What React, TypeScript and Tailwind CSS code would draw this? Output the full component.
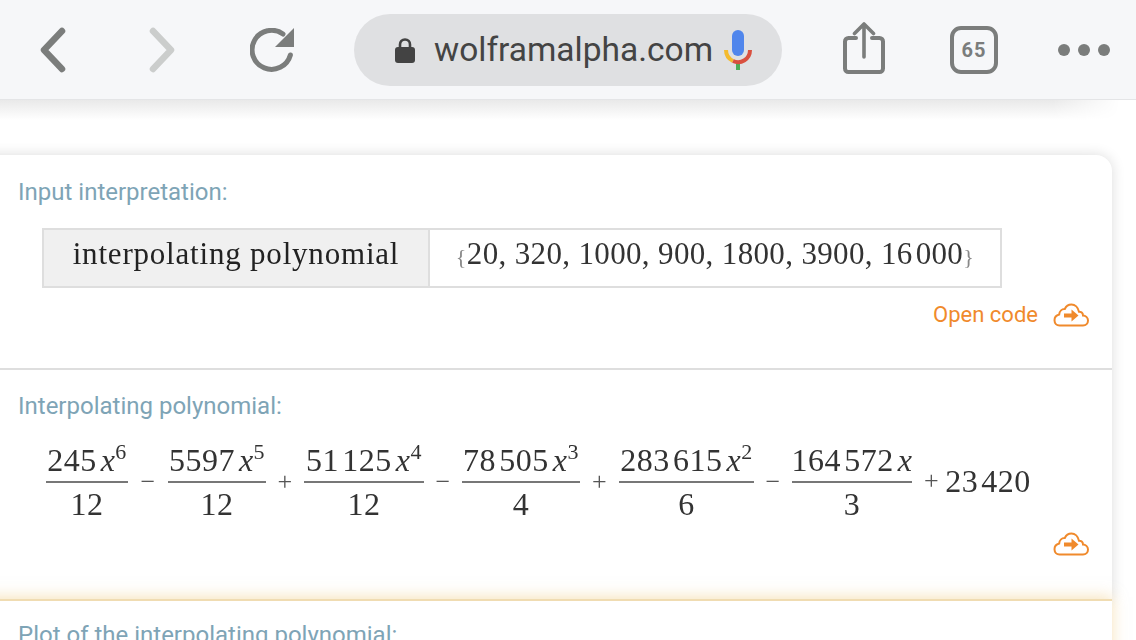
import React from "react";

const serif = "[font-family:'Liberation_Serif',serif]";

function Cloud() {
  return (
    <svg width="36" height="24" viewBox="0 0 36 24" fill="none" className="shrink-0">
      <path d="M6.5 22.5 H30 C33 22.5 35 20.3 35 17.5 C35 14.5 32.5 12.5 30 12.5 C30 10 28 8.5 26 8.7 C25 4.5 22 1.5 18.5 1.5 C15.5 1.5 13 3.2 11.8 6 C9 5.8 6.5 8 6.2 11.5 C3.4 12.2 1.5 14.5 1.5 17.3 C1.5 20.4 3.6 22.5 6.5 22.5 Z" stroke="#f08a2c" strokeWidth="2" />
      <path d="M11 10.5 H18.5 V6.5 L25.5 12.5 L18.5 18.5 V14.5 H11 Z" fill="#f08a2c" />
    </svg>
  );
}

function Frac({ n, exp, d, w }: { n: string; exp?: string; d: string; w: string }) {
  return (
    <div className={`${w} flex flex-col items-stretch text-center shrink-0`}>
      <div className="h-[43px] flex items-end justify-center whitespace-nowrap leading-[36px] pb-[3px]">
        <span>{n}</span>
        <span className="italic ml-[4px]">x</span>
        {exp && <span className="text-[22px] leading-none relative -top-[15px]">{exp}</span>}
      </div>
      <div className="h-[2px] bg-[#777]" />
      <div className="h-[40px] leading-[42px]">{d}</div>
    </div>
  );
}

function Op({ c, w }: { c: string; w: string }) {
  return <div className={`${w} text-center text-[26px] text-[#555] shrink-0 pt-[2px]`}>{c}</div>;
}

export default function App() {
  return (
    <div className="h-[640px] w-[1136px] overflow-hidden bg-white font-['Roboto',sans-serif]">
      <header className="h-[100px] bg-[#f6f7f9] border-b border-[#e4e5e7] flex items-center">
        <svg width="26" height="46" viewBox="0 0 26 46" fill="none" className="ml-[40px]">
          <path d="M22 4 L4 23 L22 42" stroke="#7b7d7c" strokeWidth="6.5" strokeLinecap="round" strokeLinejoin="round" />
        </svg>
        <svg width="26" height="46" viewBox="0 0 26 46" fill="none" className="ml-[83px]">
          <path d="M4 4 L22 23 L4 42" stroke="#cbcdcc" strokeWidth="6.5" strokeLinecap="round" strokeLinejoin="round" />
        </svg>
        <svg width="44" height="44" viewBox="0 0 44 44" fill="none" className="ml-[75px]">
          <path d="M40.4 27 A19.5 19.5 0 1 1 33 6" stroke="#7b7d7c" strokeWidth="5" strokeLinecap="round" />
          <path d="M44 0 V19 H25 Z" fill="#7b7d7c" />
        </svg>
        <div className="ml-[60px] w-[428px] h-[72px] rounded-full bg-[#dfe0e2] flex items-center">
          <svg width="20" height="26" viewBox="0 0 20 26" className="ml-[41px]">
            <path d="M5 11 V7.5 C5 4.5 7 2.5 10 2.5 C13 2.5 15 4.5 15 7.5 V11" fill="none" stroke="#434343" strokeWidth="2.6" />
            <rect x="0" y="10" width="20" height="16" rx="3" fill="#434343" />
          </svg>
          <span className="ml-[19px] text-[33.5px] text-[#444] whitespace-nowrap leading-none w-[290px]">wolframalpha.com</span>
          <svg width="28" height="40" viewBox="0 0 28 40" fill="none">
            <rect x="8" y="0" width="12" height="26" rx="6" fill="#5086ec" />
            <path d="M12 32 H16 V40 H12 Z" fill="#4cae58" />
            <path d="M2 20 C2 25 5 29 9 31" stroke="#f4bb2f" strokeWidth="4" />
            <path d="M9 31 C17 34.5 26 29 26 20" stroke="#d9503f" strokeWidth="4" />
          </svg>
        </div>
        <svg width="42" height="52" viewBox="0 0 42 52" fill="none" className="ml-[61px] mb-[4px]">
          <path d="M13 16 H5.5 C3.5 16 2 17.5 2 19.5 V46.5 C2 48.5 3.5 50 5.5 50 H36.5 C38.5 50 40 48.5 40 46.5 V19.5 C40 17.5 38.5 16 36.5 16 H29" stroke="#7b7d7c" strokeWidth="4" strokeLinecap="round" />
          <path d="M21 35 V3 M11.5 11.5 L21 2 L30.5 11.5" stroke="#7b7d7c" strokeWidth="3.6" strokeLinecap="round" strokeLinejoin="round" />
        </svg>
        <div className="ml-[65px] w-[48px] h-[48px] rounded-[11px] border-[4px] border-[#7b7d7c] flex items-center justify-center text-[20px] font-bold text-[#7b7d7c] tracking-[1px] leading-none">
          65
        </div>
        <div className="ml-[60px] flex gap-[8px]">
          <div className="w-[12px] h-[12px] rounded-full bg-[#7b7d7c]" />
          <div className="w-[12px] h-[12px] rounded-full bg-[#7b7d7c]" />
          <div className="w-[12px] h-[12px] rounded-full bg-[#7b7d7c]" />
        </div>
      </header>
      <div className="h-[20px] w-[1120px] bg-gradient-to-b from-[#e9e9e9] to-white [mask-image:linear-gradient(to_right,black_94%,transparent)]" />

      <main className="mt-[35px] ml-[-16px] mr-[24px]">
        <section className="relative rounded-tr-[16px] bg-white shadow-[0_0_14px_rgba(0,0,0,0.14)] h-[444px]">
          <div className="h-[215px] border-b-2 border-[#dedede] pl-[34px]">
            <h2 className="pt-[22px] text-[24px] leading-[30px] text-[#7ea4b6]">Input interpretation:</h2>
            <div className={`mt-[21px] ml-[24px] w-[960px] h-[60px] border-2 border-[#dedede] flex ${serif} text-[#333]`}>
              <div className="w-[386px] bg-[#f0f0f0] border-r-2 border-[#dedede] text-center text-[31px] leading-[48px] tracking-[0.8px] text-[#222] blur-[0.3px]">
                interpolating polynomial
              </div>
              <div className="flex-1 text-center text-[31px] leading-[48px] tracking-[0.35px] whitespace-nowrap blur-[0.3px]">
                <span className="text-[#888] text-[22px]">{"{"}</span>20, 320, 1000, 900, 1800, 3900, 16{"\u200A"}000<span className="text-[#888] text-[22px]">{"}"}</span>
              </div>
            </div>
            <div className="mt-[11px] pr-[23px] flex justify-end items-center gap-[15px] text-[22px] leading-[32px] text-[#f08a2c]">
              <span>Open code</span>
              <Cloud />
            </div>
          </div>

          <div className="pl-[34px] relative">
            <h2 className="pt-[21px] text-[24px] leading-[30px] text-[#7ea4b6]">Interpolating polynomial:</h2>
            <div className={`mt-[17px] ml-[28px] flex items-center ${serif} text-[32px] tracking-[0.5px] text-[#333] whitespace-nowrap blur-[0.3px]`}>
              <Frac n="245" exp="6" d="12" w="w-[82px]" />
              <Op c="−" w="w-[40px]" />
              <Frac n="5597" exp="5" d="12" w="w-[98px]" />
              <Op c="+" w="w-[38px]" />
              <Frac n={"51\u200A125"} exp="4" d="12" w="w-[120px]" />
              <Op c="−" w="w-[38px]" />
              <Frac n={"78\u200A505"} exp="3" d="4" w="w-[118px]" />
              <Op c="+" w="w-[39px]" />
              <Frac n={"283\u200A615"} exp="2" d="6" w="w-[135px]" />
              <Op c="−" w="w-[38px]" />
              <Frac n={"164\u200A572"} d="3" w="w-[120px]" />
              <div className="ml-[12px] shrink-0 flex items-center"><span className="text-[26px] text-[#555] mr-[6px]">+</span>23{"\u200A"}420</div>
            </div>
            <div className="mt-[9px] pr-[23px] flex justify-end">
              <Cloud />
            </div>
          </div>
        </section>

        <section className="relative z-10 h-[60px] bg-white border-t-2 border-[#f0dcb2] shadow-[0_-2px_14px_rgba(240,200,120,0.5)] pl-[34px]">
          <h2 className="pt-[19px] text-[24px] leading-[30px] text-[#7ea4b6]">Plot of the interpolating polynomial:</h2>
        </section>
      </main>
    </div>
  );
}
